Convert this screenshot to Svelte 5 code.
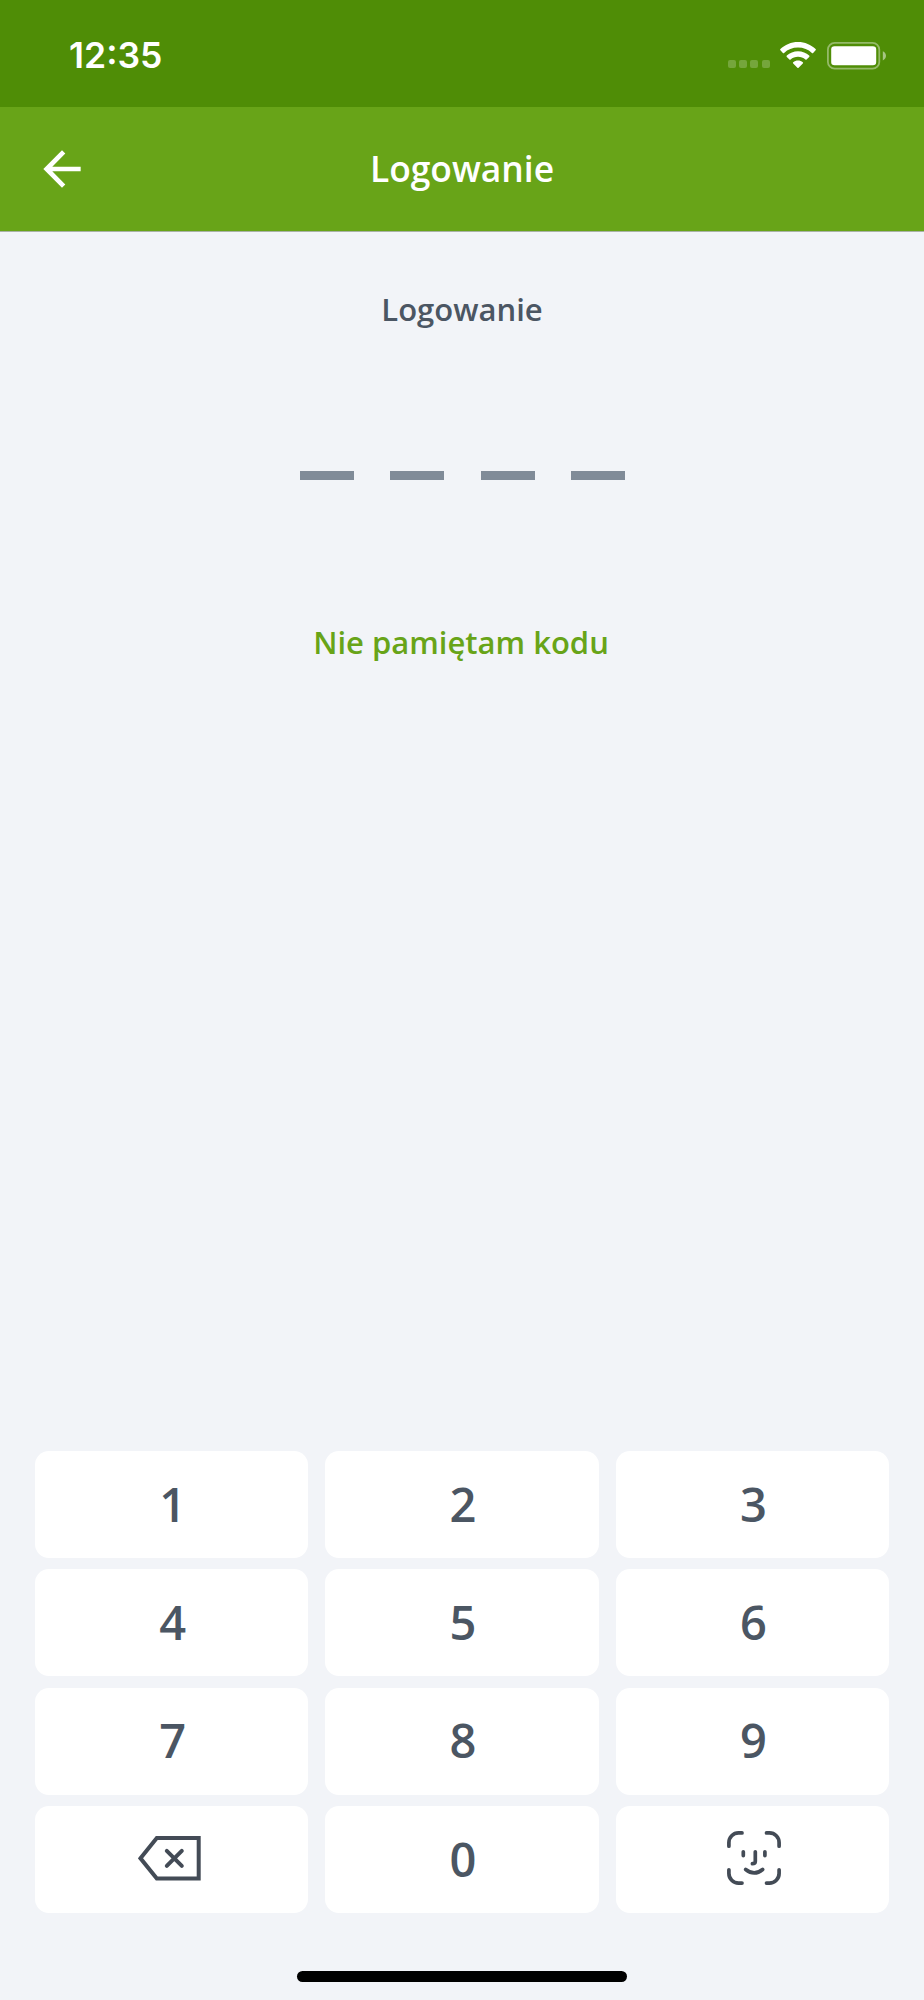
<script lang="ts">
	const title = 'Logowanie';
	const codeLength = 4;
	const keys = ['1', '2', '3', '4', '5', '6', '7', '8', '9', 'delete', '0', 'face'];

	let code = $state('');

	function press(key: string) {
		if (key === 'delete') {
			code = code.slice(0, -1);
		} else if (key !== 'face' && code.length < codeLength) {
			code += key;
		}
	}
</script>

<div class="screen">
	<div class="status-bar">
		<span class="time">12:35</span>
		<div class="status-icons">
			<div class="signal">
				{#each Array(4) as _}
					<i></i>
				{/each}
			</div>
			<svg class="wifi" viewBox="0 0 36 27">
				<path d="M18 0C11.1 0 4.900 2.700.4 7.100a.9.9 0 0 0 0 1.200l2.500 2.600a.9.9 0 0 0 1.200 0C7.700 7.500 12.600 5.500 18 5.500s10.300 2 13.900 5.400a.9.9 0 0 0 1.200 0l2.500-2.600a.9.9 0 0 0 0-1.200C31.100 2.700 24.900 0 18 0z" />
				<path d="M18 9.300c-4.300 0-8.200 1.600-11.200 4.300a.9.9 0 0 0 0 1.300l2.600 2.500a.9.9 0 0 0 1.200 0c2-1.700 4.600-2.700 7.400-2.700s5.400 1 7.400 2.700a.9.9 0 0 0 1.200 0l2.600-2.500a.9.9 0 0 0 0-1.300C26.200 10.900 22.300 9.300 18 9.300z" />
				<path d="M18 18.600c-1.800 0-3.500.6-4.800 1.700a.8.8 0 0 0 0 1.200l4.200 4.300a.9.9 0 0 0 1.200 0l4.200-4.300a.8.8 0 0 0 0-1.200c-1.300-1.100-3-1.700-4.800-1.700z" />
			</svg>
			<svg class="battery" viewBox="0 0 60 28">
				<rect class="shell" x="0.9" y="0.9" width="51.400" height="25.800" rx="6.800" />
				<rect x="4.200" y="4.200" width="45" height="19" rx="3.300" />
				<path class="cap" d="M55.800 9.200c2 .8 3.200 2.600 3.200 4.600s-1.200 3.800-3.200 4.600z" />
			</svg>
		</div>
	</div>

	<header>
		<button class="back" aria-label="Wstecz">
			<svg viewBox="0 0 24 24">
				<path d="M20 11H7.830l5.590-5.590L12 4l-8 8 8 8 1.410-1.410L7.830 13H20z" />
			</svg>
		</button>
		<h1>{title}</h1>
	</header>

	<main>
		<h2>{title}</h2>
		<div class="code">
			{#each Array(codeLength) as _, i}
				<span class="slot" class:filled={i < code.length}></span>
			{/each}
		</div>
		<button class="forgot">Nie pamiętam kodu</button>
	</main>

	<div class="keypad">
		{#each keys as key}
			<button class="key" aria-label={key} onclick={() => press(key)}>
				{#if key === 'delete'}
					<svg class="icon delete" viewBox="0 0 63 45">
						<path d="M2.500 22.300 18.800 2H60.700V42.600H18.800z" />
						<path class="round" d="M28.800 14.900l15 15M43.800 14.900l-15 15" />
					</svg>
				{:else if key === 'face'}
					<svg class="icon face" viewBox="0 0 54 54">
						<path d="M1.900 15.200V11.500A9.600 9.600 0 0 1 11.500 1.900H15M39.500 1.900H42.500A9.600 9.600 0 0 1 52.100 11.500V15.200M52.100 38.800V42.500A9.600 9.600 0 0 1 42.500 52.100H39.500M15 52.100H11.500A9.600 9.600 0 0 1 1.900 42.500V38.800" />
						<path d="M16.300 20.800v3.800M37.900 20.800v3.800M28.300 20.800v9.400q0 2.500-2.900 2.500M18.700 38.500Q27.300 45.300 35.600 38.500" />
					</svg>
				{:else}
					<span>{key}</span>
				{/if}
			</button>
		{/each}
	</div>

	<div class="home-bar"></div>
</div>

<style>
	:global(body) {
		background: #f2f4f8;
	}

	.screen {
		display: flex;
		flex-direction: column;
		box-sizing: border-box;
		width: 924px;
		height: 2000px;
		padding-bottom: 18px;
		background: #f2f4f8;
		color: #4b5663;
		font-family: 'Open Sans', sans-serif;
		font-weight: 600;
	}

	button {
		padding: 0;
		border: 0;
		background: none;
		color: inherit;
		font: inherit;
	}

	svg {
		display: block;
	}

	.status-bar {
		display: flex;
		justify-content: space-between;
		box-sizing: border-box;
		height: 107px;
		padding: 42px 37px 0 69px;
		background: #4f8d06;
	}

	.time {
		color: #fff;
		font-family: Inter, sans-serif;
		font-size: 35.500px;
		line-height: 28px;
	}

	.status-icons {
		display: flex;
		align-items: flex-start;
	}

	.signal {
		display: flex;
		gap: 3.200px;
		margin: 18px 10.500px 0 0;
	}

	.signal i {
		width: 8px;
		height: 8px;
		border-radius: 2px;
		background: rgba(255, 255, 255, 0.22);
	}

	.wifi {
		width: 36px;
		height: 27px;
		margin-right: 11px;
		fill: #fff;
	}

	.battery {
		width: 60px;
		height: 28px;
		fill: #fff;
	}

	.battery .shell {
		fill: none;
		stroke: rgba(255, 255, 255, 0.4);
		stroke-width: 1.800;
	}

	.battery .cap {
		fill: rgba(255, 255, 255, 0.5);
	}

	header {
		display: grid;
		grid-template-columns: 120px 1fr 120px;
		align-items: center;
		box-sizing: border-box;
		height: 125px;
		border-bottom: 1px solid #a9b3a6;
		background: #68a418;
		color: #fff;
	}

	.back {
		width: 56px;
		margin-left: 34px;
	}

	.back svg {
		width: 56px;
		height: 56px;
		fill: #fff;
	}

	h1,
	h2 {
		margin: 0;
		font-weight: 600;
		text-align: center;
	}

	h1 {
		padding-bottom: 2px;
		font-size: 35.400px;
		line-height: 50px;
	}

	main {
		display: flex;
		flex: 1;
		flex-direction: column;
		align-items: center;
		padding-top: 56px;
	}

	h2 {
		font-size: 31px;
		line-height: 43px;
	}

	.code {
		display: flex;
		gap: 36.300px;
		margin: 140px 0 141px 1px;
	}

	.slot {
		width: 54px;
		height: 9px;
		background: #808b98;
	}

	.slot.filled {
		background: #68a418;
	}

	.forgot {
		margin-right: 2px;
		color: #68a418;
		font-size: 31px;
		line-height: 43px;
	}

	.keypad {
		display: grid;
		grid-template-columns: repeat(3, 1fr);
		grid-auto-rows: 107px;
		gap: 11.300px 17px;
		margin: 0 35px 58px;
	}

	.key {
		display: flex;
		align-items: center;
		justify-content: center;
		border-radius: 14px;
		background: #fff;
		font-size: 47px;
		line-height: 64px;
	}

	.key span {
		padding: 0 0 2px 2px;
	}

	.icon {
		fill: none;
		stroke: #434b56;
		stroke-width: 4;
	}

	.delete {
		width: 63px;
		height: 45px;
		margin: 0 4px 2px 0;
	}

	.delete .round,
	.face {
		stroke-linecap: round;
	}

	.face {
		width: 54px;
		height: 54px;
		margin: 0 0 3px 4px;
		stroke-width: 3.700;
	}

	.home-bar {
		align-self: center;
		width: 330px;
		height: 11px;
		border-radius: 6px;
		background: #000;
	}
</style>
